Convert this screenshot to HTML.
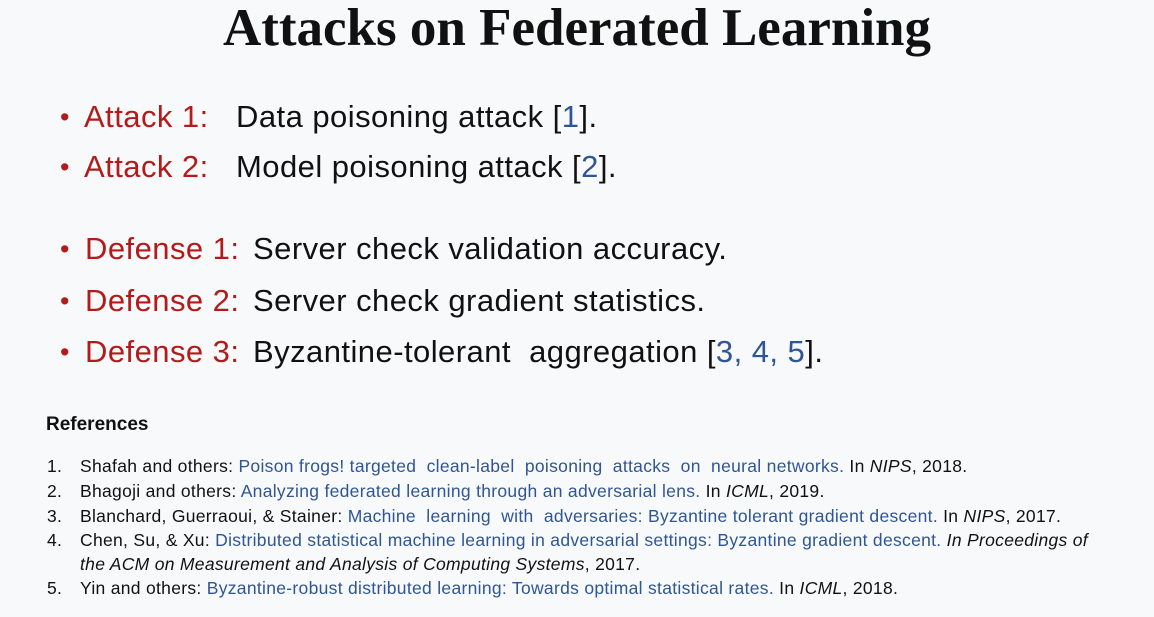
<!DOCTYPE html>
<html><head><meta charset="utf-8"><style>
body{margin:0;width:1154px;height:617px;background:#f8f9fa;overflow:hidden;font-family:"Liberation Sans",sans-serif;position:relative}
.t{position:absolute;left:0;width:1154px;text-align:center;top:-3px;font-family:"Liberation Serif",serif;font-weight:bold;font-size:53px;color:#111;line-height:62px}
.b{position:absolute;font-size:31px;color:#111;white-space:nowrap;line-height:36px;letter-spacing:0.45px}
.r{color:#b31b1b}.bl{color:#2e5597}
.dot{position:absolute;left:60px;color:#b31b1b;font-size:27px;line-height:36px}
.ref{position:absolute;left:46px;top:414px;font-weight:bold;font-size:19px;color:#111}
.li{position:absolute;left:0;font-size:17.5px;color:#111;white-space:nowrap;line-height:22px;letter-spacing:0.3px}
.n{position:absolute;left:47px}
.x{position:absolute;left:80px}
</style></head><body>
<div class="t">Attacks on Federated Learning</div>
<div class="dot" style="top:99px">•</div>
<div class="b r" style="left:84px;top:99px">Attack 1:</div>
<div class="b" style="left:236px;top:99px">Data poisoning attack [<span class="bl">1</span>].</div>
<div class="dot" style="top:149px">•</div>
<div class="b r" style="left:84px;top:149px">Attack 2:</div>
<div class="b" style="left:236px;top:149px">Model poisoning attack [<span class="bl">2</span>].</div>
<div class="dot" style="top:231px">•</div>
<div class="b r" style="left:85px;top:231px">Defense 1:</div>
<div class="b" style="left:253px;top:231px">Server check validation accuracy.</div>
<div class="dot" style="top:283px">•</div>
<div class="b r" style="left:85px;top:283px">Defense 2:</div>
<div class="b" style="left:253px;top:283px">Server check gradient statistics.</div>
<div class="dot" style="top:334px">•</div>
<div class="b r" style="left:85px;top:334px">Defense 3:</div>
<div class="b" style="left:253px;top:334px">Byzantine-tolerant&nbsp; aggregation [<span class="bl">3, 4, 5</span>].</div>
<div class="ref">References</div>
<div class="li" style="top:455px"><span class="n">1.</span><span class="x">Shafah and others: <span class="bl">Poison frogs! targeted&nbsp; clean-label&nbsp; poisoning&nbsp; attacks&nbsp; on&nbsp; neural networks.</span> In <i>NIPS</i>, 2018.</span></div>
<div class="li" style="top:480px"><span class="n">2.</span><span class="x">Bhagoji and others: <span class="bl">Analyzing federated learning through an adversarial lens.</span> In <i>ICML</i>, 2019.</span></div>
<div class="li" style="top:505px"><span class="n">3.</span><span class="x">Blanchard, Guerraoui, &amp; Stainer: <span class="bl">Machine&nbsp; learning&nbsp; with&nbsp; adversaries: Byzantine tolerant gradient descent.</span> In <i>NIPS</i>, 2017.</span></div>
<div class="li" style="top:529px"><span class="n">4.</span><span class="x">Chen, Su, &amp; Xu: <span class="bl">Distributed statistical machine learning in adversarial settings: Byzantine gradient descent.</span> <i>In Proceedings of</i></span></div>
<div class="li" style="top:553px"><span class="x"><i>the ACM on Measurement and Analysis of Computing Systems</i>, 2017.</span></div>
<div class="li" style="top:577px"><span class="n">5.</span><span class="x">Yin and others: <span class="bl">Byzantine-robust distributed learning: Towards optimal statistical rates.</span> In <i>ICML</i>, 2018.</span></div>
</body></html>
